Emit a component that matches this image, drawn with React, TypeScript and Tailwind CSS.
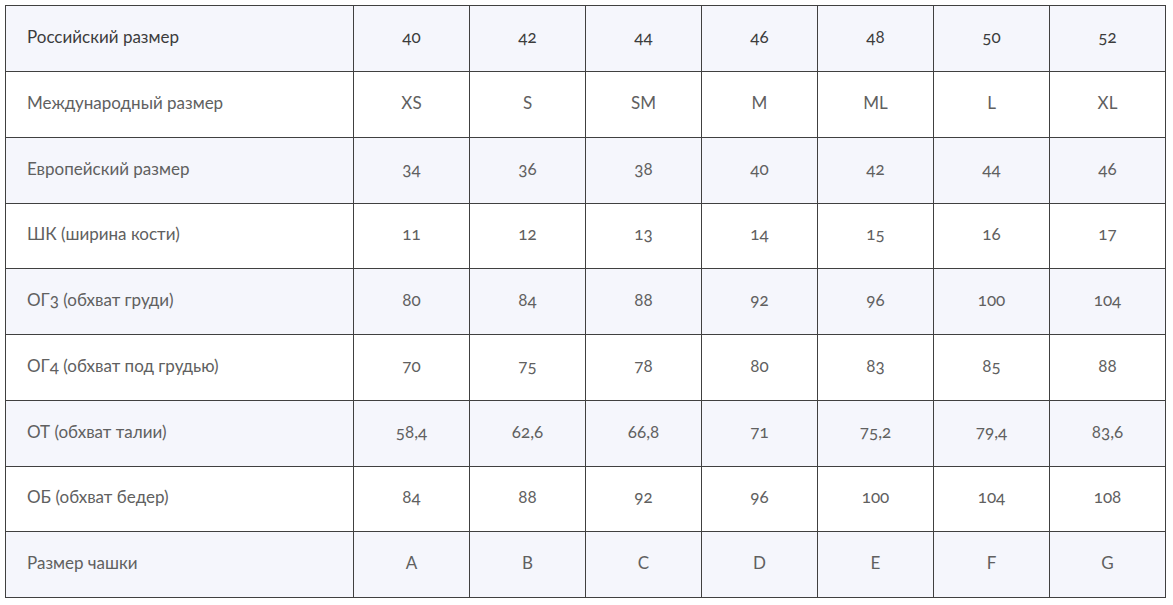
const COLS = ['40', '42', '44', '46', '48', '50', '52'];

const ROWS: { label: string; values: string[] }[] = [
  { label: 'Международный размер', values: ['XS', 'S', 'SM', 'M', 'ML', 'L', 'XL'] },
  { label: 'Европейский размер', values: ['34', '36', '38', '40', '42', '44', '46'] },
  { label: 'ШК (ширина кости)', values: ['11', '12', '13', '14', '15', '16', '17'] },
  { label: 'ОГ3 (обхват груди)', values: ['80', '84', '88', '92', '96', '100', '104'] },
  { label: 'ОГ4 (обхват под грудью)', values: ['70', '75', '78', '80', '83', '85', '88'] },
  { label: 'ОТ (обхват талии)', values: ['58,4', '62,6', '66,8', '71', '75,2', '79,4', '83,6'] },
  { label: 'ОБ (обхват бедер)', values: ['84', '88', '92', '96', '100', '104', '108'] },
  { label: 'Размер чашки', values: ['A', 'B', 'C', 'D', 'E', 'F', 'G'] },
];

const HEIGHTS = ['h-[66px]', 'h-[66px]', 'h-[66px]', 'h-[65px]', 'h-[66px]', 'h-[66px]', 'h-[66px]', 'h-[65px]', 'h-[66px]'];

export default function App() {
  return (
    <div className="bg-white min-h-[605px] p-[5px] font-['Lato','Open_Sans',sans-serif] oldstyle-nums">
      <table className="border-collapse table-fixed w-[1161px] text-[17px]">
        <colgroup>
          <col className="w-[348px]" />
          {COLS.map((c) => <col key={c} className="w-[116px]" />)}
        </colgroup>
        <tbody>
          <tr className={`${HEIGHTS[0]} bg-[#f5f6fc] text-[#3c3c3c]`}>
            <td className="border border-[#404040] pl-[21px] pb-[4px] align-middle">Российский размер</td>
            {COLS.map((c) => (
              <td key={c} className="border border-[#404040] pb-[4px] text-center align-middle">{c}</td>
            ))}
          </tr>
          {ROWS.map((row, i) => (
            <tr
              key={row.label}
              className={`${HEIGHTS[i + 1]} ${i % 2 === 1 ? 'bg-[#f5f6fc]' : 'bg-white'} text-[#606060]`}
            >
              <td className="border border-[#404040] pl-[21px] pb-[4px] align-middle">{row.label}</td>
              {row.values.map((v, j) => (
                <td key={j} className="border border-[#404040] pb-[4px] text-center align-middle">{v}</td>
              ))}
            </tr>
          ))}
        </tbody>
      </table>
    </div>
  );
}
